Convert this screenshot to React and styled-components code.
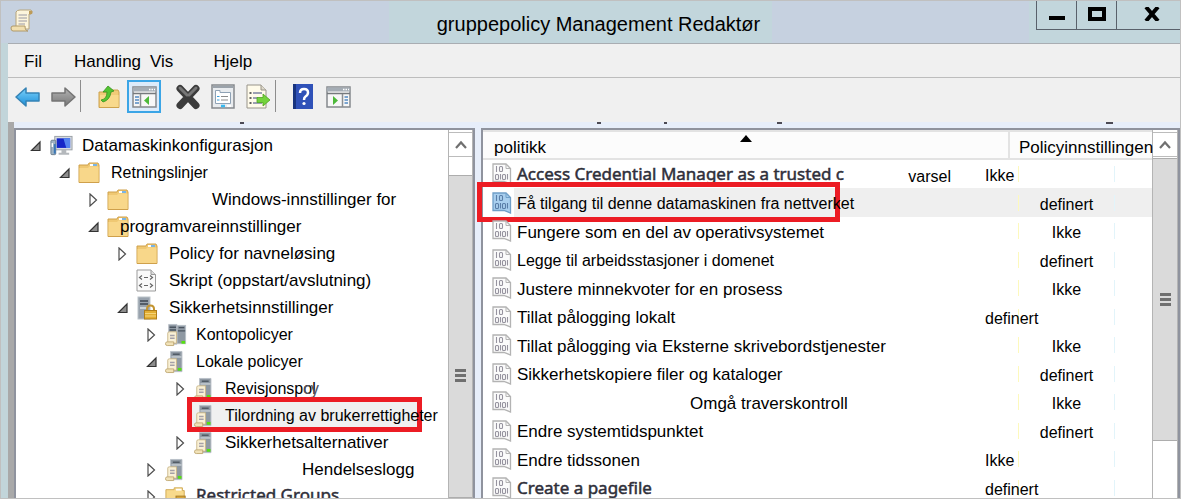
import * as React from 'react'
import styled, { createGlobalStyle, css } from 'styled-components'

const GlobalStyle = createGlobalStyle`
  * {
    box-sizing: border-box;
  }

  body {
    margin: 0;
    overflow: hidden;
    font-family: 'Liberation Sans', Arial, sans-serif;
    font-size: 17px;
    color: #000;
  }
`

const Window = styled.div`
  display: flex;
  flex-direction: column;
  height: 100vh;
  overflow: hidden;
  border: 1px solid #c0c0c0;
  background: #c2d5da;
`

const TitleBar = styled.header`
  display: grid;
  grid-template-columns: 1fr auto 1fr;
  flex: none;
  height: 42px;
  background: #c6d1e0;
`

const TitleIcon = styled.div`
  padding: 8px 9px;
`

const Title = styled.h1`
  margin: 0 20px 0 0;
  padding: 0 12px 0 48px;
  background: #c2d6dc;
  font-size: 20px;
  font-weight: normal;
  line-height: 46px;
  height: 42px;
`

const WindowControls = styled.div`
  display: flex;
  justify-self: end;
  padding-left: 8px;
  background: #c2d6dc;
`

const ControlButton = styled.button`
  display: flex;
  align-items: center;
  justify-content: center;
  width: ${props => props.$wide ? 64 : 41}px;
  height: 29px;
  margin: 0 0 0 -1px;
  padding: 0 0 2px ${props => props.$wide ? 6 : 0}px;
  border: solid #59616b;
  border-width: 0 0 1px 1px;
  background: transparent;
`

const Body = styled.div`
  display: flex;
  flex: 1;
  flex-direction: column;
  min-height: 0;
  margin-left: 7px;
`

const MenuBar = styled.nav`
  display: flex;
  flex: none;
  align-items: center;
  height: 35px;
  padding-left: 16px;
  border-top: 1px solid #a9adb2;
  border-bottom: 1px solid #bdbdbd;
  background: #f0f0f0;
`

const MenuButton = styled.button`
  padding: 2px 0 0;
  margin-right: ${props => props.$gap}px;
  border: 0;
  background: transparent;
  font: inherit;
`

const ToolBar = styled.div`
  display: flex;
  flex: none;
  align-items: flex-start;
  height: 44px;
  padding: 2px 3px 0;
  background: #f0f0f0;
`

const ToolGroup = styled.div`
  display: flex;
  gap: 1px;
  margin-right: ${props => props.$gap || 0}px;
`

const ToolButton = styled.button`
  display: flex;
  align-items: center;
  justify-content: center;
  width: 34px;
  height: 33px;
  padding: 0;
  border: 2px solid ${props => props.$active ? '#3ba5e6' : 'transparent'};
  background: ${props => props.$active ? '#dcebfa' : 'transparent'};
`

const Separator = styled.div`
  width: 1px;
  height: 32px;
  margin: 0 ${props => props.$gap}px 0 0;
  background: #8d8d8d;
`

// the descenders of the hidden heading row show as short dark marks
const mark = (x, width) => `linear-gradient(#4b4a55, #4b4a55) ${x}px 0 / ${width}px 2px no-repeat`

const HeadingStrip = styled.div`
  flex: none;
  height: 6px;
  margin-left: 6px;
  background:
    ${mark(226, 4)},
    ${mark(583, 4)},
    ${mark(650, 3)},
    ${mark(763, 5)},
    ${mark(1092, 7)},
    #e7eefa;
`

const Frame = styled.div`
  display: flex;
  flex: 1;
  flex-direction: column;
  min-height: 0;
  background: linear-gradient(90deg, #a9a9a9 6px, #e7eefa 6px);
`

const Panes = styled.main`
  display: grid;
  grid-template-columns: minmax(300px, 461px) 1fr;
  grid-template-rows: 100%;
  gap: 6px;
  flex: 1;
  min-height: 0;
  margin-left: 6px;
`

const Pane = styled.section`
  display: flex;
  min-width: 0;
  min-height: 0;
  border: solid #8f939e;
  border-width: 2px 2px 0 2px;
  background: #fff;
`

const Tree = styled.ul`
  flex: 1;
  min-width: 0;
  margin: 0;
  padding: 2px 0 0;
  list-style: none;
`

const TreeRow = styled.li`
  display: flex;
  align-items: center;
  height: 27px;
  padding-left: ${props => 14 + props.$level * 29}px;
  white-space: nowrap;
`

const Toggle = styled.button`
  display: flex;
  flex: none;
  width: 19px;
  padding: 0;
  border: 0;
  background: transparent;
`

const TreeIcon = styled.span`
  position: relative;
  z-index: 1;
  display: flex;
  flex: none;
  width: ${props => props.$narrow ? 22 : 24}px;
  margin-right: 9px;
`

const plainLabel = css`
  position: relative;
  z-index: 1;
  font-size: ${props => props.$small ? 16 : 17}px;
`

const originalLabel = css`
  font-family: 'Noto Sans', sans-serif;
  font-size: 17px;
  line-height: 20px;
  color: #2f2f3a;
  -webkit-text-stroke: 0.5px #2f2f3a;
`

const TreeLabel = styled.span`
  ${props => props.$original ? originalLabel : plainLabel}
  padding-bottom: ${props => props.$original ? 4 : 0}px;
  margin-left: ${props => props.$lead || 0}px;
`

const Ghost = styled.span`
  position: absolute;
  left: 78px;
  bottom: 0;
  font-family: 'Noto Sans', sans-serif;
  line-height: 20px;
  color: #55555f;
`

const Highlight = styled.span`
  position: absolute;
  border: 5px solid #ec1c24;
`

const TreeHighlight = styled(Highlight)`
  top: -7px;
  left: -7px;
  width: 235px;
  height: 35px;
  background: #f0f0f0;
  z-index: -1;
`

const ListHighlight = styled(Highlight)`
  top: -7px;
  left: -6px;
  width: 363px;
  height: 40px;
`

const ScrollBar = styled.div`
  display: flex;
  flex: none;
  flex-direction: column;
  width: ${props => props.$wide ? 26 : 25}px;
  padding-top: 2px;
  border: solid #b4b4b4;
  border-width: 0 1px;
  background: #fff;
`

const ScrollButton = styled.button`
  display: flex;
  flex: none;
  align-items: center;
  justify-content: center;
  height: 25px;
  padding: 0;
  border: solid #bcbcbc;
  border-width: 1px 0;
  background: #fff;
`

const Thumb = styled.div`
  display: flex;
  flex: ${props => props.$length ? 'none' : '1'};
  flex-direction: column;
  align-items: center;
  justify-content: center;
  gap: 2px;
  height: ${props => props.$length ? props.$length + 'px' : 'auto'};
  margin-top: ${props => props.$gap}px;
  padding-top: ${props => props.$length ? 0 : 78}px;
  border: solid #adadad;
  border-width: 1px 0;
  background: #dadada;
`

const Grip = styled.span`
  width: 11px;
  height: 3px;
  background: #6f6f6f;
`

const TableBox = styled.div`
  flex: 1;
  min-width: 0;
`

const Table = styled.table`
  width: 100%;
  table-layout: fixed;
  border-spacing: 0;
  white-space: nowrap;

  td, th {
    padding: 0;
  }
`

const HeadCell = styled.th`
  position: relative;
  height: 30px;
  border: solid #e3e3e3;
  border-width: 2px 2px 2px 0;
  background: #fcfcfc;
  font-weight: normal;
  text-align: left;

  &:last-child {
    border-right: 0;
  }
`

const HeadLabel = styled.span`
  position: relative;
  z-index: 1;
  display: block;
  padding: 5px 0 0 ${props => props.$inset}px;
  line-height: 19px;
`

const SortMark = styled.svg`
  position: absolute;
  top: 3px;
  left: calc(50% - 6px);
`

const Row = styled.tr`
  height: 28px;
  background: ${props => props.$selected
    ? 'linear-gradient(90deg, #fff 31px, #efefef 31px)'
    : 'transparent'};

  &:nth-child(even) {
    height: 29px;
  }
`

const NameCell = styled.div`
  position: relative;
  display: flex;
  align-items: center;
  height: 28px;
  padding-left: 9px;
`

const NameIcon = styled.span`
  display: flex;
  width: 25px;
`

const Name = styled.span`
  ${props => props.$original ? originalLabel : plainLabel}
  padding-top: ${props => props.$original ? 0 : 3}px;
  margin-left: ${props => props.$lead || 0}px;
`

const Note = styled.span`
  margin: 0 34px 0 auto;
  padding-top: 5px;
  font-size: 16px;
`

const Value = styled.div`
  position: relative;
  z-index: 1;
  width: 25px;
  padding-top: 4px;
  font-size: 16px;
`

const Slot = styled.div`
  width: 97px;
  height: 16px;
  margin-left: 8px;
  border: solid #fdf9bd;
  border-width: 0 1px;
  border-right-color: #e2f4fa;
  font-size: 16px;
  line-height: 20px;
  text-align: center;
`

const ArrowIcon = ({ flip, from, to, stroke }) => (
  <svg width='26' height='20' viewBox='0 0 26 20'>
    <defs>
      <linearGradient id={flip ? 'fwd' : 'back'} x1='0' y1='0' x2='0' y2='1'>
        <stop offset='0' stopColor={from} />
        <stop offset='1' stopColor={to} />
      </linearGradient>
    </defs>
    <path
      d='M1 10 L11 1 V6 H24 V14 H11 V19 Z'
      transform={flip ? 'translate(26 0) scale(-1 1)' : undefined}
      fill={`url(#${flip ? 'fwd' : 'back'})`}
      stroke={stroke}
      strokeWidth='1.5'
      strokeLinejoin='round'
    />
  </svg>
)

const FolderIcon = ({ up }) => up
  ? (
    <svg width='24' height='24' viewBox='0 0 24 24'>
      <path d='M2 7 H12 L14 5 H21 L22 7 V22.500 H2 Z' fill='#f0cb78' stroke='#cda24c' />
      <path d='M3 10 H21.500 V22 H3 Z' fill='#f8d98c' />
      <path d='M4 15 Q10 14 10 7 L6 7 L11 1 L17 6 L14 7 Q13 15 6 17 Z' fill='#53c431' stroke='#38931f' strokeWidth='.8' />
    </svg>
  )
  : (
    <svg width='24' height='22' viewBox='0 0 24 22'>
      <path d='M1 3 H10 L11 1 H20 L21 3 V20.500 H1 Z' fill='#efc873' stroke='#cfa04b' />
      <path d='M1.500 6 H10 L11.500 4.500 H20.500 V20 H1.500 Z' fill='#f8d78a' />
      <path d='M12 3 H19' stroke='#fff' strokeWidth='2' />
      <path d='M15 3 H19' stroke='#4c9bdc' strokeWidth='1.500' />
    </svg>
  )

const PanelIcon = ({ right }) => (
  <svg width='25' height='22' viewBox='0 0 25 22'>
    <rect x='1' y='1' width='23' height='20' fill='#f7f7f7' stroke='#85898d' strokeWidth='1.5' />
    <path d='M1 3.500 H24' stroke='#a5adb5' strokeWidth='4' />
    <path d='M17 3.500 H23' stroke='#fff' strokeWidth='1.5' strokeDasharray='1.5 1' />
    <path d='M1 7.500 H24' stroke='#75797d' strokeWidth='1.5' />
    <path d={right ? 'M16.500 8 V21' : 'M8.500 8 V21'} stroke='#8b8f93' strokeWidth='1.5' />
    <path d={right ? 'M18.500 11 H22 M18.500 14 H22 M18.500 17 H22' : 'M3 11 H7 M3 14 H7 M3 17 H7'} stroke='#538bc4' strokeWidth='1.5' />
    <path d={right ? 'M7 10 L12 14.500 L7 19 Z' : 'M17 10 L12 14.500 L17 19 Z'} fill='#4db93a' />
  </svg>
)

const DeleteIcon = () => (
  <svg width='26' height='26' viewBox='0 0 26 26'>
    <path d='M5 4.500 L21 21.500 M21 4.500 L5 21.500' stroke='#3c3c3c' strokeWidth='7' strokeLinecap='round' />
    <path d='M5 4 L12 11 M21 4 L14 11' stroke='#777' strokeWidth='3' strokeLinecap='round' />
  </svg>
)

const PropertiesIcon = () => (
  <svg width='24' height='25' viewBox='0 0 24 25'>
    <rect x='1' y='1' width='22' height='23' fill='#e9ecef' stroke='#85898d' strokeWidth='1.5' />
    <path d='M2 3 H22' stroke='#9ba3ab' strokeWidth='2' />
    <path d='M4.500 6.500 H9 V8.500 H19.500 V19.500 H4.500 Z' fill='#fff' stroke='#8fa2b5' />
    <path d='M10 12.500 H17 M10 16 H17' stroke='#8b8b8b' />
    <path d='M6 12.500 H8.500 M6 16 H8.500' stroke='#38a0dc' />
    <path d='M10 22 H14' stroke='#38baf0' strokeWidth='2.5' />
    <path d='M16 22 H20' stroke='#fff' strokeWidth='2' />
  </svg>
)

const ExportIcon = () => (
  <svg width='26' height='25' viewBox='0 0 26 25'>
    <path d='M2 1 H16 L21 6 V24 H2 Z' fill='#fffbea' stroke='#98948a' />
    <path d='M16 1 V6 H21' fill='#ded9cb' stroke='#98948a' />
    <path d='M8 9 H17 M8 14 H13 M8 19 H17' stroke='#7d82a0' strokeWidth='1.5' />
    <path d='M4.500 9 H6.500 M4.500 14 H6.500 M4.500 19 H6.500' stroke='#333' strokeWidth='1.5' />
    <path d='M12 13.500 H18 V10 L25 16 L18 22 V18.500 H12 Z' fill='#73d33c' stroke='#4fa51f' strokeWidth='.8' />
  </svg>
)

const HelpIcon = () => (
  <svg width='20' height='25' viewBox='0 0 20 25'>
    <rect x='0' y='0' width='20' height='25' fill='#2f51b8' />
    <rect x='0' y='0' width='3' height='25' fill='#18347f' />
    <path d='M7 9 Q7 5 11 5 Q15 5 15 8.500 Q15 11 12.500 12.500 Q11 13.500 11 16' fill='none' stroke='#fff' strokeWidth='2.500' />
    <circle cx='11' cy='19.500' r='1.600' fill='#fff' />
  </svg>
)

const ScrollIcon = () => (
  <svg width='24' height='25' viewBox='0 0 24 25'>
    <path d='M6 3 Q7 1 10 1 H21 Q23 2 21 5 H19 V20 H6 Z' fill='#fdf5dc' stroke='#b6a47c' />
    <path d='M19 2 Q23 1 22.500 4 Q22 6 19 5 Z' fill='#bd9b58' />
    <path d='M1 19 Q1 17 3 17 H15 Q15 22 18 22 H3 Q1 22 1 19 Z' fill='#f1dfb0' stroke='#b09968' />
    <path d='M8.500 6 H17 M8.500 9 H17 M8.500 12 H17 M8.500 15 H15' stroke='#9a99a5' />
  </svg>
)

const ComputerIcon = () => (
  <svg width='25' height='22' viewBox='0 0 25 22'>
    <rect x='6' y='1' width='18' height='14' fill='#d6dbe0' stroke='#9aa0a6' />
    <rect x='8' y='3' width='14' height='10' fill='#1426c8' />
    <path d='M15 3 H22 V13 H18 Z' fill='#5384f0' />
    <path d='M13 15 H18 V18 H21 V20 H10 V18 H13 Z' fill='#b4b8bc' />
    <rect x='2' y='5' width='5' height='15' rx='1' fill='#9fb3c4' stroke='#6f7f8d' />
    <path d='M6 9 V19' stroke='#3a78b8' strokeWidth='2' />
    <path d='M3.500 8 V12' stroke='#fff' strokeWidth='1.5' />
  </svg>
)

const ScriptIcon = () => (
  <svg width='21' height='23' viewBox='0 0 21 23'>
    <path d='M1 1 H15 L19.500 5.500 V22 H1 Z' fill='#fafafa' stroke='#9b9b9b' />
    <path d='M15 1 V5.500 H19.500' fill='#ddd' stroke='#9b9b9b' />
    <path d='M6 6.500 L3.500 8.500 L6 10.500 M8 8.500 H12 M14 6.500 L16.500 8.500 L14 10.500 M6 14.500 L3.500 16.500 L6 18.500 M8 16.500 H12 M14 14.500 L16.500 16.500 L14 18.500' fill='none' stroke='#666' strokeWidth='1.2' />
  </svg>
)

const LockIcon = () => (
  <svg width='22' height='24' viewBox='0 0 22 24'>
    <rect x='2' y='1' width='12' height='22' fill='#98a2ad' stroke='#bcc3ca' />
    <path d='M4 5 H12 M4 8 H12' stroke='#3c4652' strokeWidth='1.500' />
    <path d='M4 12 H12' stroke='#dfe4e8' strokeWidth='1.500' />
    <path d='M11 15 V13 Q11 9.500 14.500 9.500 Q18 9.500 18 13 V15' fill='none' stroke='#c39430' strokeWidth='2' />
    <rect x='8.500' y='14.500' width='12' height='8.500' fill='#e3af34' stroke='#b07f1b' />
    <path d='M9 17.500 H20 M9 20 H20' stroke='#f6d57a' />
  </svg>
)

const ServerIcon = ({ pair }) => (
  <svg width='24' height='24' viewBox='0 0 24 24'>
    {pair && <rect x='13' y='1.500' width='9.500' height='20' fill='#8f99a3' stroke='#b9c0c7' />}
    {pair && <path d='M15 4 H21 M14 7.500 H22' stroke='#4b5560' strokeWidth='1.500' />}
    <path d={pair ? 'M4 .5 H13 V22 H4 Z' : 'M6 .5 H18.500 V22.500 H6 Z'} fill='#8f99a3' stroke='#b9c0c7' />
    <path d={pair ? 'M5 3.500 H12 M5 6.500 H12' : 'M8.500 3.500 H16'} stroke='#4b5560' strokeWidth='1.500' />
    {!pair && <path d='M7 6.500 H18' stroke='#c9d0d6' strokeWidth='1.500' />}
    <path d='M3 10 Q3 8.500 5 8.500 H12.500 V21 H3 Z' fill='#faf1d6' stroke='#c9b78a' />
    <path d='M.5 21.500 Q.5 19.500 2.500 19.500 H9.500 V23.500 H2.500 Q.5 23.500 .5 21.500 Z' fill='#f1e2b8' stroke='#c0a873' />
    <path d='M5.500 12.500 H10.500 M5.500 15.500 H10.500' stroke='#a4a0a8' strokeWidth='1.500' />
    <rect x={pair ? 18 : 14} y='18.500' width='4' height='3' fill='#55e010' />
  </svg>
)

const RestrictedIcon = () => (
  <svg width='24' height='22' viewBox='0 0 24 22'>
    <path d='M1 3 H10 V1 H19 V4 H21 V20 H1 Z' fill='#f8da8c' stroke='#cfa751' />
    <path d='M12 3 H18' stroke='#fff' strokeWidth='2' />
    <rect x='12' y='10' width='10' height='9' fill='#d7a63c' stroke='#a67a22' />
  </svg>
)

const PolicyIcon = ({ selected }) => (
  <svg width='20' height='22' viewBox='0 0 20 22'>
    <path
      d='M1 1 H14 L18.500 5.500 V21 L12 18.500 H1 Z'
      fill={selected ? '#a9cfee' : '#fbfbfb'}
      stroke={selected ? '#6f9fc8' : '#b3b3b3'}
      strokeWidth='1.300'
    />
    <path d='M14 1 V5.500 H18.500' fill='none' stroke={selected ? '#6f9fc8' : '#b3b3b3'} />
    <g fill='none' stroke={selected ? '#5a7ea8' : '#96939f'} strokeWidth='1.100'>
      <path d='M4.500 3 V9 M8.500 11 V16.500 M15.500 11 V16.500' />
      <rect x='7.500' y='3.500' width='3' height='5' rx='1' />
      <rect x='3.500' y='11.500' width='3' height='5' rx='1' />
      <rect x='10.500' y='11.500' width='3' height='5' rx='1' />
    </g>
  </svg>
)

const ToggleIcon = ({ open }) => (
  <svg width='12' height='14' viewBox='0 0 12 14'>
    {open
      ? <path d='M10 3 V11.500 H1.500 Z' fill='#8d8d8d' stroke='#333' strokeWidth='1.200' />
      : <path d='M2 1 L8.500 7 L2 13 Z' fill='#fff' stroke='#4d4d4d' strokeWidth='1.200' />}
  </svg>
)

const icons = {
  computer: <ComputerIcon />,
  folder: <FolderIcon />,
  script: <ScriptIcon />,
  lock: <LockIcon />,
  pair: <ServerIcon pair />,
  server: <ServerIcon />,
  restricted: <RestrictedIcon />
}

const tree = [
  { text: 'Datamaskinkonfigurasjon', level: 0, icon: 'computer', open: true },
  { text: 'Retningslinjer', level: 1, icon: 'folder', open: true, small: true },
  { text: 'Windows-innstillinger for', level: 2, icon: 'folder', open: false, lead: 72 },
  { text: 'programvareinnstillinger', level: 2, icon: 'folder', open: true, lead: -20 },
  { text: 'Policy for navneløsing', level: 3, icon: 'folder', open: false },
  { text: 'Skript (oppstart/avslutning)', level: 3, icon: 'script' },
  { text: 'Sikkerhetsinnstillinger', level: 3, icon: 'lock', open: true },
  { text: 'Kontopolicyer', level: 4, icon: 'pair', open: false, small: true },
  { text: 'Lokale policyer', level: 4, icon: 'server', open: true, small: true },
  { text: 'Revisjonspol', ghost: 'cy', level: 5, icon: 'server', open: false, small: true },
  { text: 'Tilordning av brukerrettigheter', level: 5, icon: 'server', small: true, selected: true },
  { text: 'Sikkerhetsalternativer', level: 5, icon: 'server', open: false },
  { text: 'Hendelseslogg', level: 4, icon: 'server', open: false, lead: 106 },
  { text: 'Restricted Groups', level: 4, icon: 'restricted', open: false, original: true }
]

const policies = [
  { name: 'Access Credential Manager as a trusted c', note: 'varsel', early: 'Ikke', original: true },
  { name: 'Få tilgang til denne datamaskinen fra nettverket', value: 'definert', small: true, selected: true },
  { name: 'Fungere som en del av operativsystemet', value: 'Ikke' },
  { name: 'Legge til arbeidsstasjoner i domenet', value: 'definert', small: true },
  { name: 'Justere minnekvoter for en prosess', value: 'Ikke' },
  { name: 'Tillat pålogging lokalt', early: 'definert' },
  { name: 'Tillat pålogging via Eksterne skrivebordstjenester', value: 'Ikke' },
  { name: 'Sikkerhetskopiere filer og kataloger', value: 'definert' },
  { name: 'Omgå traverskontroll', value: 'Ikke', lead: 173 },
  { name: 'Endre systemtidspunktet', value: 'definert' },
  { name: 'Endre tidssonen', early: 'Ikke' },
  { name: 'Create a pagefile', early: 'definert', original: true }
]

const Scroll = ({ wide, gap, length }) => (
  <ScrollBar $wide={wide}>
    <ScrollButton aria-label='Rull opp'>
      <svg width='12' height='9' viewBox='0 0 12 9'>
        <path d='M1 8 L6 2.500 L11 8' fill='none' stroke='#707070' strokeWidth='2.200' />
      </svg>
    </ScrollButton>
    <Thumb $gap={gap} $length={length}>
      <Grip />
      <Grip />
      <Grip />
    </Thumb>
  </ScrollBar>
)

const TreeItem = ({ item }) => (
  <TreeRow $level={item.level}>
    {item.open === undefined
      ? <Toggle as='span' />
      : <Toggle aria-label={item.text} aria-expanded={item.open}><ToggleIcon open={item.open} /></Toggle>}
    <TreeIcon $narrow={item.level > 3}>
      {item.selected && <TreeHighlight />}
      {icons[item.icon]}
    </TreeIcon>
    <TreeLabel $small={item.small} $lead={item.lead} $original={item.original}>
      {item.text}
      {item.ghost && <Ghost>{item.ghost}</Ghost>}
    </TreeLabel>
  </TreeRow>
)

const PolicyRow = ({ policy }) => (
  <Row $selected={policy.selected}>
    <td>
      <NameCell>
        {policy.selected && <ListHighlight />}
        <NameIcon><PolicyIcon selected={policy.selected} /></NameIcon>
        <Name $small={policy.small} $lead={policy.lead} $original={policy.original}>{policy.name}</Name>
        {policy.note && <Note>{policy.note}</Note>}
      </NameCell>
    </td>
    <td><Value>{policy.early}</Value></td>
    <td><Slot>{policy.value}</Slot></td>
  </Row>
)

class App extends React.PureComponent {
  render () {
    return (
      <Window>
        <GlobalStyle />
        <TitleBar>
          <TitleIcon><ScrollIcon /></TitleIcon>
          <Title>gruppepolicy Management Redaktør</Title>
          <WindowControls>
            <ControlButton aria-label='Minimer'>
              <svg width='16' height='16'><path d='M0 12 H16' stroke='#000' strokeWidth='4' /></svg>
            </ControlButton>
            <ControlButton aria-label='Maksimer'>
              <svg width='18' height='14'><rect x='2' y='2' width='14' height='10' fill='none' stroke='#000' strokeWidth='4' /></svg>
            </ControlButton>
            <ControlButton aria-label='Lukk' $wide>
              <svg width='16' height='14'><path d='M2 0 L14 14 M14 0 L2 14' stroke='#000' strokeWidth='4' /></svg>
            </ControlButton>
          </WindowControls>
        </TitleBar>
        <Body>
          <MenuBar>
            <MenuButton $gap={32}>Fil</MenuButton>
            <MenuButton $gap={9}>Handling</MenuButton>
            <MenuButton $gap={40}>Vis</MenuButton>
            <MenuButton $gap={0}>Hjelp</MenuButton>
          </MenuBar>
          <ToolBar>
            <ToolGroup>
              <ToolButton aria-label='Tilbake'><ArrowIcon from='#7cd2fb' to='#1c8ed8' stroke='#3583b5' /></ToolButton>
              <ToolButton aria-label='Frem'><ArrowIcon flip from='#b4b4b4' to='#777' stroke='#747474' /></ToolButton>
            </ToolGroup>
            <Separator $gap={11} />
            <ToolGroup $gap={10}>
              <ToolButton aria-label='Opp'><FolderIcon up /></ToolButton>
              <ToolButton aria-label='Vis konsolltre' $active><PanelIcon /></ToolButton>
            </ToolGroup>
            <ToolGroup>
              <ToolButton aria-label='Slett'><DeleteIcon /></ToolButton>
              <ToolButton aria-label='Egenskaper'><PropertiesIcon /></ToolButton>
              <ToolButton aria-label='Eksporter liste'><ExportIcon /></ToolButton>
            </ToolGroup>
            <Separator $gap={10} />
            <ToolGroup>
              <ToolButton aria-label='Hjelp'><HelpIcon /></ToolButton>
              <ToolButton aria-label='Vis handlingsrute'><PanelIcon right /></ToolButton>
            </ToolGroup>
          </ToolBar>
          <Frame>
            <HeadingStrip />
            <Panes>
              <Pane>
                <Tree>
                  {tree.map(item => <TreeItem key={item.text} item={item} />)}
                </Tree>
                <Scroll gap={18} />
              </Pane>
              <Pane>
                <TableBox>
                  <Table>
                    <colgroup>
                      <col />
                      <col width='25' />
                      <col width='142' />
                    </colgroup>
                    <thead>
                      <tr>
                        <HeadCell colSpan={2}>
                          <HeadLabel $inset={11}>politikk</HeadLabel>
                          <SortMark width='12' height='7' viewBox='0 0 12 7'>
                            <path d='M0 7 L6 0 L12 7 Z' />
                          </SortMark>
                        </HeadCell>
                        <HeadCell><HeadLabel $inset={9}>Policyinnstillingen</HeadLabel></HeadCell>
                      </tr>
                    </thead>
                    <tbody>
                      {policies.map(policy => <PolicyRow key={policy.name} policy={policy} />)}
                    </tbody>
                  </Table>
                </TableBox>
                <Scroll wide gap={1} length={283} />
              </Pane>
            </Panes>
          </Frame>
        </Body>
      </Window>
    )
  }
}

export {
  App as default
}
